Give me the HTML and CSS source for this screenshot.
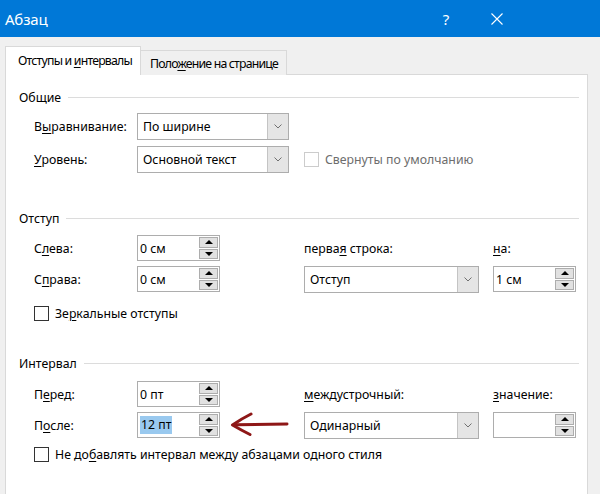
FILE: index.html
```html
<!DOCTYPE html>
<html lang="ru">
<head>
<meta charset="utf-8">
<title>Абзац</title>
<link rel="stylesheet" href="styles.css">
</head>
<body>
<div class="titlebar">
  <span class="title">Абзац</span>
  <span class="help">?</span>
  <span class="close"><svg width="12" height="12" viewBox="0 0 12 12"><path d="M0.5 0.5 L11.5 11.5 M11.5 0.5 L0.5 11.5" stroke="#fff" stroke-width="1.1" fill="none"/></svg></span>
</div>
<div class="tabs">
  <div class="tab active"><span>Отступы и <u>и</u>нтервалы</span></div>
  <div class="tab"><span>Поло<u>ж</u>ение на странице</span></div>
</div>
<div class="panel">
  <section class="group">
    <div class="group-title"><span>Общие</span><i class="rule"></i></div>
    <div class="grid g-general">
      <label class="lbl"><span>В<u>ы</u>равнивание:</span></label>
      <div class="select"><span class="val">По ширине</span><span class="dd"><svg width="8" height="5" viewBox="0 0 8 5"><path d="M0.5 0.5 L4 4 L7.5 0.5" stroke="#707070" fill="none"/></svg></span></div>
      <span></span><span></span>
      <label class="lbl"><span><u>У</u>ровень:</span></label>
      <div class="select"><span class="val">Основной текст</span><span class="dd"><svg width="8" height="5" viewBox="0 0 8 5"><path d="M0.5 0.5 L4 4 L7.5 0.5" stroke="#707070" fill="none"/></svg></span></div>
      <div class="check disabled span2"><span class="box"></span><span>Свернуты по умолчанию</span></div>
    </div>
  </section>

  <section class="group g2">
    <div class="group-title"><span>Отступ</span><i class="rule"></i></div>
    <div class="grid g-rows">
      <label class="lbl"><span>С<u>л</u>ева:</span></label>
      <div class="spin"><span class="val">0 см</span><span class="btns"><span class="up"></span><span class="down"></span></span></div>
      <label class="lbl"><span>перва<u>я</u> строка:</span></label>
      <label class="lbl"><span><u>н</u>а:</span></label>
      <label class="lbl"><span>С<u>п</u>рава:</span></label>
      <div class="spin"><span class="val">0 см</span><span class="btns"><span class="up"></span><span class="down"></span></span></div>
      <div class="select wide"><span class="val">Отступ</span><span class="dd"><svg width="8" height="5" viewBox="0 0 8 5"><path d="M0.5 0.5 L4 4 L7.5 0.5" stroke="#707070" fill="none"/></svg></span></div>
      <div class="spin"><span class="val">1 см</span><span class="btns"><span class="up"></span><span class="down"></span></span></div>
    </div>
    <div class="check row-check"><span class="box"></span><span>Зе<u>р</u>кальные отступы</span></div>
  </section>

  <section class="group g3">
    <div class="group-title"><span>Интервал</span><i class="rule"></i></div>
    <div class="grid g-rows g-rows3">
      <label class="lbl"><span>П<u>е</u>ред:</span></label>
      <div class="spin"><span class="val">0 пт</span><span class="btns"><span class="up"></span><span class="down"></span></span></div>
      <label class="lbl"><span><u>м</u>еждустрочный:</span></label>
      <label class="lbl"><span><u>з</u>начение:</span></label>
      <label class="lbl"><span>П<u>о</u>сле:</span></label>
      <div class="with-arrow">
        <div class="spin"><span class="val"><span class="sel">12 пт</span></span><span class="btns"><span class="up"></span><span class="down"></span></span></div>
        <svg class="arrow" width="60" height="26" viewBox="0 0 60 26"><path d="M58 12 L7 12.7" stroke="#8e1717" stroke-width="3" stroke-linecap="round" fill="none"/><path d="M22 2 Q13 6.5 3.5 13 Q12 18 21 22.5" stroke="#8e1717" stroke-width="3" stroke-linecap="round" stroke-linejoin="round" fill="none"/></svg>
      </div>
      <div class="select wide"><span class="val">Одинарный</span><span class="dd"><svg width="8" height="5" viewBox="0 0 8 5"><path d="M0.5 0.5 L4 4 L7.5 0.5" stroke="#707070" fill="none"/></svg></span></div>
      <div class="spin"><span class="val"></span><span class="btns"><span class="up"></span><span class="down"></span></span></div>
    </div>
    <div class="check row-check last"><span class="box"></span><span>Не до<u>б</u>авлять интервал между абзацами одного стиля</span></div>
  </section>
</div>
</body>
</html>
```

FILE: styles.css
```css
* { box-sizing: border-box; }
html, body { margin: 0; padding: 0; }
body {
  width: 600px;
  height: 494px;
  overflow: hidden;
  background: #f0f0f0;
  font-family: "Noto Sans", "Open Sans", sans-serif;
  font-size: 12.3px;
  color: #000;
}
u { text-decoration: underline; text-underline-offset: 2px; }

.titlebar {
  height: 37px;
  background: #0078d7;
  color: #fff;
  display: flex;
  align-items: center;
  padding-left: 5px;
}
.title { flex: 1; font-size: 15px; letter-spacing: -0.2px; }
.help { font-size: 15px; width: 16px; text-align: center; margin-right: 37px; }
.close { display: flex; width: 12px; margin-right: 97px; }

.tabs {
  display: flex;
  align-items: flex-end;
  margin: 9px 0 0 5px;
  height: 29px;
  position: relative;
  z-index: 1;
}
.tab {
  height: 25px;
  width: 147px;
  margin-left: -1px;
  border: 1px solid #d9d9d9;
  border-bottom: none;
  background: #f0f0f0;
  padding-left: 9px;
  display: flex;
  align-items: center;
  padding-top: 1px;
  white-space: nowrap;
  letter-spacing: -0.8px;
}
.tab.active {
  height: 29px;
  width: 136px;
  margin-left: 0;
  background: #fff;
  padding-left: 12px;
  padding-bottom: 3px;
}

.panel {
  margin: -1px 0 0 5px;
  width: 583px;
  height: 430px;
  background: #fff;
  border: 1px solid #d9d9d9;
  padding: 14px 8px 0 13px;
}

.group-title {
  display: flex;
  align-items: center;
  height: 16px;
  gap: 7px;
}
.rule { flex: 1; height: 1px; background: #dcdcdc; }

.grid {
  display: grid;
  grid-template-columns: 103px 167px 189px 84px;
  margin-left: 15px;
}
.g-general { margin-top: 8px; grid-auto-rows: 27px; row-gap: 6px; }
.g-rows { margin-top: 9px; grid-auto-rows: 26px; row-gap: 5px; }
.g-rows3 { margin-top: 10px; }
.g2 { margin-top: 37px; }
.g3 { margin-top: 34px; }

.lbl { display: flex; align-items: center; white-space: nowrap; }
.span2 { grid-column: 3 / span 2; }

.select {
  width: 152px;
  height: 27px;
  border: 1px solid #adadad;
  display: flex;
  background: #fff;
}
.select.wide { width: 175px; }
.select .val { flex: 1; padding-left: 5px; display: flex; align-items: center; }
.select .dd {
  width: 21px;
  background: #e5e5e5;
  border-left: 1px solid #c4c4c4;
  display: flex;
  align-items: center;
  justify-content: center;
}

.spin {
  width: 83px;
  height: 26px;
  border: 1px solid #adadad;
  display: flex;
  background: #fff;
}
.spin .val { flex: 1; padding-left: 2px; display: flex; align-items: center; }
.sel { background: #99c9ef; padding: 0 1px; line-height: 18px; }
.btns {
  width: 19px;
  margin: 1px 1px 1px 0;
  display: flex;
  flex-direction: column;
  gap: 1px;
}
.btns span {
  flex: 1;
  background: #e1e1e1;
  border: 1px solid #adadad;
  display: flex;
  align-items: center;
  justify-content: center;
}
.btns .up::before {
  content: "";
  border-left: 4px solid transparent;
  border-right: 4px solid transparent;
  border-bottom: 4px solid #000;
}
.btns .down::before {
  content: "";
  border-left: 4px solid transparent;
  border-right: 4px solid transparent;
  border-top: 4px solid #000;
}

.with-arrow { display: flex; align-items: center; }
.arrow { margin-left: 9px; }

.check { display: flex; align-items: center; gap: 6px; white-space: nowrap; }
.check .box {
  width: 15px;
  height: 15px;
  border: 1px solid #333;
  background: #fff;
  flex: none;
}
.check.disabled { color: #6d6d6d; }
.check.disabled .box { border-color: #cccccc; }
.row-check { margin: 14px 0 0 15px; height: 15px; }
.row-check.last { margin-top: 9px; }
```
